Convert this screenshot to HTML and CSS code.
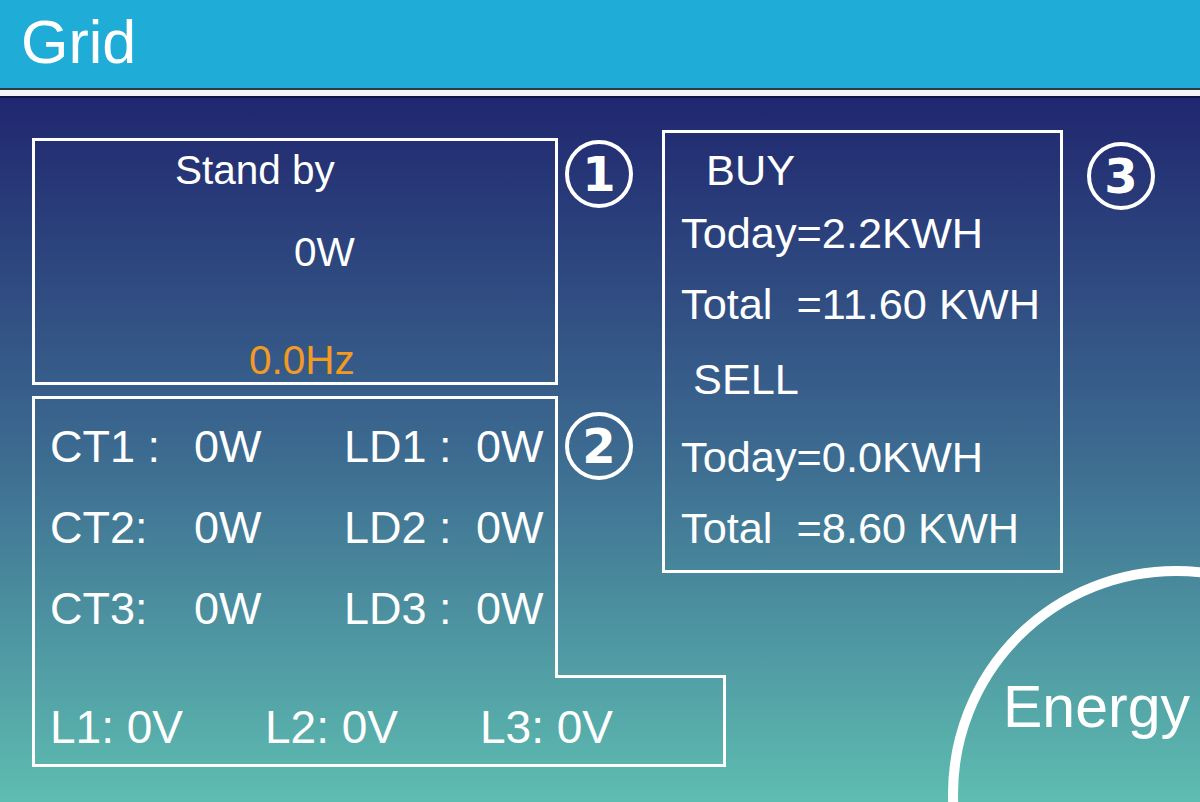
FILE: index.html
```html
<!DOCTYPE html>
<html lang="en">
<head>
  <meta charset="UTF-8">
  <title>Grid</title>
  <link rel="stylesheet" href="styles.css">
</head>
<body>
  <header class="title-bar">
    <h1>Grid</h1>
  </header>
  <div class="rule"></div>

  <main class="panel">
    <div class="left-col">
      <div class="status-row">
        <section class="box status">
          <p class="state">Stand by</p>
          <p class="power">0W</p>
          <p class="freq">0.0Hz</p>
        </section>
        <span class="badge">1</span>
      </div>

      <section class="meters">
        <div class="meters-head">
          <div class="meters-top">
            <div class="meter-row"><span>CT1 :</span><span>0W</span><span>LD1 :</span><span>0W</span></div>
            <div class="meter-row"><span>CT2:</span><span>0W</span><span>LD2 :</span><span>0W</span></div>
            <div class="meter-row"><span>CT3:</span><span>0W</span><span>LD3 :</span><span>0W</span></div>
          </div>
          <span class="badge badge-meters">2</span>
        </div>
        <div class="meters-foot">
          <span>L1: 0V</span>
          <span>L2: 0V</span>
          <span>L3: 0V</span>
        </div>
      </section>
    </div>

    <div class="right-col">
      <section class="box energy-log">
        <p class="heading buy">BUY</p>
        <p class="today">Today=2.2KWH</p>
        <p class="total">Total&nbsp;&nbsp;=11.60 KWH</p>
        <p class="heading sell">SELL</p>
        <p class="today">Today=0.0KWH</p>
        <p class="total">Total&nbsp;&nbsp;=8.60 KWH</p>
      </section>
      <span class="badge badge-log">3</span>
    </div>

    <div class="energy-btn">Energy</div>
  </main>
</body>
</html>
```

FILE: styles.css
```css
html, body {
  margin: 0;
  height: 802px;
  overflow: hidden;
}

body {
  font-family: "Liberation Sans", Arial, sans-serif;
  color: white;
  background: #1f2670;
}

p {
  margin: 0;
}

/* top bar */
.title-bar {
  height: 88px;
  background: #1fadd7;
}

.title-bar h1 {
  margin: 0;
  padding-left: 21px;
  font-size: 61px;
  font-weight: normal;
  line-height: 84px;
}

.rule {
  height: 6px;
  background: #f4f4f4;
  border-top: 2px solid #2e3a44;
  border-bottom: 2px solid #0f1545;
}

/* main screen */
.panel {
  position: relative;
  display: flex;
  height: 704px;
  padding-left: 32px;
  box-sizing: border-box;
  overflow: hidden;
  background: linear-gradient(180deg, #20276f 0%, #3c6a90 50%, #5ebdb1 100%);
}

.left-col {
  flex: none;
  width: 601px;
  padding-top: 40px;
}

.right-col {
  display: flex;
  align-items: flex-start;
  margin-left: 29px;
  padding-top: 32px;
}

.box {
  border: 3px solid white;
  box-sizing: border-box;
}

.badge {
  flex: none;
  width: 68px;
  height: 68px;
  margin: 2px 0 0 7px;
  border: 4px solid white;
  border-radius: 50%;
  box-sizing: border-box;
  font-family: "DejaVu Sans", sans-serif;
  font-size: 48px;
  font-weight: bold;
  line-height: 60px;
  text-align: center;
}

.badge-meters {
  margin-top: 16px;
}

.badge-log {
  margin: 12px 0 0 24px;
}

/* box 1 */
.status-row {
  display: flex;
  align-items: flex-start;
}

.status {
  width: 526px;
  height: 247px;
  font-size: 40.5px;
  line-height: 40px;
}

.state {
  margin: 9px 0 0 140px;
}

.power {
  margin: 42px 0 0 259px;
}

.freq {
  margin: 68px 0 0 214px;
  color: #f39a22;
}

/* box 2, L shaped */
.meters {
  width: 694px;
  margin-top: 11px;
}

.meters-head {
  display: flex;
  align-items: flex-start;
}

.meters-top {
  width: 526px;
  height: 279px;
  padding: 25px 0 0 15px;
  box-sizing: border-box;
  border: 3px solid white;
  border-bottom: none;
  display: flex;
  flex-direction: column;
  gap: 36px;
}

.meter-row {
  display: grid;
  grid-template-columns: 144px 150px 132px auto;
  font-size: 45px;
  line-height: 45px;
  white-space: pre;
}

.meters-foot {
  height: 92px;
  padding: 29px 0 0 15px;
  box-sizing: border-box;
  border: 3px solid white;
  border-top: none;
  background: linear-gradient(white, white) right top / 171px 3px no-repeat;
  background-origin: border-box;
  display: grid;
  grid-template-columns: 215px 215px auto;
  font-size: 46px;
  line-height: 46px;
}

/* box 3 */
.energy-log {
  width: 401px;
  height: 443px;
  padding-left: 16px;
  font-size: 43.3px;
  line-height: 42px;
}

.energy-log .buy {
  margin: 16px 0 0 25px;
}

.energy-log .today {
  margin-top: 21px;
}

.energy-log .total {
  margin-top: 29px;
}

.energy-log .sell {
  margin: 33px 0 0 12px;
}

.energy-log .sell + .today {
  margin-top: 36px;
}

/* round button in the corner */
.energy-btn {
  position: absolute;
  left: 948px;
  top: 468px;
  width: 456px;
  height: 456px;
  padding: 102px 0 0 45px;
  box-sizing: border-box;
  border: 10px solid white;
  border-radius: 50%;
  font-size: 59px;
  line-height: 59px;
}
```
